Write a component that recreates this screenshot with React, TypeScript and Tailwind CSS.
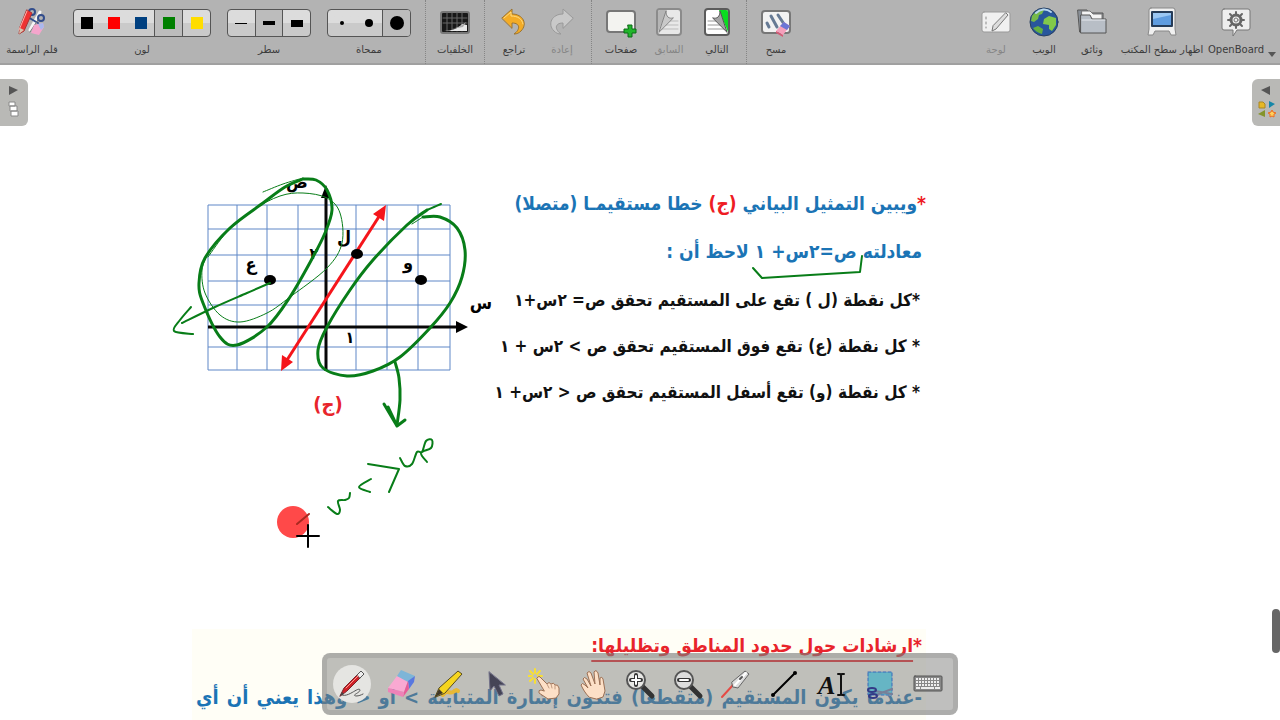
import type { ReactNode } from "react";

type Point = [number, number];

// Catmull-Rom through the recorded pen points
function smooth(points: Point[]) {
  let d = `M${points[0][0]} ${points[0][1]}`;
  for (let i = 0; i < points.length - 1; i++) {
    const p0 = points[i - 1] || points[i];
    const p1 = points[i];
    const p2 = points[i + 1];
    const p3 = points[i + 2] || p2;
    d += ` C${p1[0] + (p2[0] - p0[0]) / 6} ${p1[1] + (p2[1] - p0[1]) / 6} ${p2[0] - (p3[0] - p1[0]) / 6} ${p2[1] - (p3[1] - p1[1]) / 6} ${p2[0]} ${p2[1]}`;
  }
  return d;
}

const strokes: { width: number; points: Point[] }[] = [
  { width: 3, points: [[303, 179], [316, 180], [327, 190], [332, 210], [325, 233], [313, 257], [290, 297], [267, 327], [237, 345], [220, 337], [203, 303], [199, 283], [205, 258], [230, 228], [263, 203], [285, 187], [303, 179]] },
  { width: 1, points: [[263, 192], [283, 184], [303, 178]] },
  { width: 1, points: [[208, 257], [227, 232], [253, 210], [280, 196], [303, 193], [327, 198], [340, 213], [342, 243], [327, 268], [290, 297], [267, 313], [240, 322], [220, 315], [205, 293], [202, 270], [208, 253]] },
  { width: 3, points: [[427, 210], [407, 225], [373, 260], [350, 290], [327, 327], [318, 350], [323, 368], [347, 376], [373, 371], [400, 357], [430, 328], [450, 303], [462, 277], [465, 250], [457, 228], [440, 217], [423, 217]] },
  { width: 2, points: [[441, 204], [434, 207], [427, 210]] },
  { width: 1, points: [[423, 217], [412, 224]] },
  { width: 2, points: [[270, 283], [247, 293], [215, 307], [182, 323]] },
  { width: 2, points: [[191, 307], [180, 320], [174, 331], [193, 334]] },
  { width: 3, points: [[395, 362], [399, 378], [400, 400], [397, 425]] },
  { width: 2, points: [[328, 507], [337, 514], [340, 510], [338, 501], [345, 500], [349, 498], [350, 493]] },
  { width: 2, points: [[371, 479], [359, 487], [370, 492]] },
  { width: 2, points: [[400, 458], [405, 466], [412, 464], [417, 452], [422, 452], [426, 441], [432, 440], [431, 448], [421, 453], [427, 462]] },
];

const colors = [
  { name: "أسود", fill: "bg-black" },
  { name: "أحمر", fill: "bg-[#ff0000]" },
  { name: "أزرق", fill: "bg-[#004080]" },
  { name: "أخضر", fill: "bg-[#008000]", active: true },
  { name: "أصفر", fill: "bg-[#ffdd00]" },
];

const widths = [
  { name: "رفيع", shape: "w-3 h-px" },
  { name: "متوسط", shape: "w-3 h-1", active: true },
  { name: "سميك", shape: "w-3 h-[7px]" },
];

const erasers = [
  { name: "صغير", shape: "size-1 rounded-full" },
  { name: "متوسط", shape: "size-2 rounded-full" },
  { name: "كبير", shape: "size-3.5 rounded-full", active: true },
];

function Icon({ children }: { children: ReactNode }) {
  return (
    <svg viewBox="0 0 32 32" className="size-8" fill="none" strokeLinecap="round" strokeLinejoin="round" aria-hidden="true">
      {children}
    </svg>
  );
}

function ToolButton({ label, children, wide = "w-12", faded = false }: { label: string; children: ReactNode; wide?: string; faded?: boolean }) {
  return (
    <button type="button" className={`flex flex-col items-center gap-1 shrink-0 whitespace-nowrap ${wide} ${faded ? "text-[#858585]" : "text-[#3c3c3c]"}`}>
      {children}
      <span className="flex justify-center w-full text-[10px] leading-4">{label}</span>
    </button>
  );
}

function Choice({ label, items, wide }: { label: string; items: { name: string; fill?: string; shape?: string; active?: boolean }[]; wide: string }) {
  return (
    <div role="group" aria-label={label} className={`flex flex-col items-center shrink-0 pt-0.5 gap-[5px] text-[#3c3c3c] ${wide}`}>
      <div className="flex w-full h-7 rounded-sm border border-[#555] overflow-hidden bg-linear-to-b from-[#dcdcdc] from-50% to-[#cacaca] to-50%">
        {items.map((item, i) => (
          <button
            key={item.name}
            type="button"
            aria-label={item.name}
            aria-pressed={!!item.active}
            className={`flex-1 flex items-center justify-center ${item.active ? "bg-[#bcbcbc] border-l border-[#555]" : ""} ${item.active && i < items.length - 1 ? "border-r" : ""}`}
          >
            <span className={item.fill ? `size-3 ${item.fill}` : `bg-black ${item.shape}`} />
          </button>
        ))}
      </div>
      <span className="text-[10px] leading-4">{label}</span>
    </div>
  );
}

function Separator() {
  return <div className="w-px h-16 mx-[5px] shrink-0 border-l border-dotted border-[#858585]" />;
}

function PageIcon({ next = false }: { next?: boolean }) {
  return (
    <Icon>
      <rect x="3" y="2" width="26" height="28" rx="4" fill={next ? "#5b5b5b" : "#8b8b8b"} />
      <rect x="5" y="4" width="22" height="24" rx="2" fill={next ? "#fff" : "#e8e8e8"} />
      <path d="M7 15h18M7 19h18M7 23h18" stroke={next ? "#999" : "#bbb"} />
      {next ? (
        <>
          <path d="M18 4h7q2 0 2 2v20z" fill="#0bdc20" />
          <path d="M12 12c4 1 7-1 7-7l7 21z" fill="#a4a4a4" stroke="#555" />
        </>
      ) : (
        <>
          <path d="M14 4H7q-2 0-2 2v20z" fill="#b5b5b5" />
          <path d="M20 12c-4 1-7-1-7-7L6 26z" fill="#c9c9c9" stroke="#858585" />
        </>
      )}
    </Icon>
  );
}

function TopBar() {
  return (
    <header className="flex h-[65px] shrink-0 items-start bg-[#b3b3b3] border-b-2 border-[#a0a0a0]">
      <div className="flex items-start pt-1.5">
        <ToolButton label="قلم الراسمة" wide="w-16">
          <Icon>
            <path d="M14 24 24 6" stroke="#f5f5f5" strokeWidth="3" />
            <path d="M10 10 22 17" stroke="#324d8c" strokeWidth="2" />
            <circle cx="16" cy="6" r="3" stroke="#324d8c" strokeWidth="2" />
            <circle cx="25" cy="12" r="3" stroke="#324d8c" strokeWidth="2" />
            <path d="M22 14 14 26" stroke="#777" strokeWidth="1" />
            <path d="m11 4 5 3-8 18-5 3 1-7z" fill="#e33" stroke="#a33" />
            <path d="m11 5-8 19" stroke="#ffb0a8" />
            <path d="m4 22 4 2-5 4z" fill="#d8c5b0" />
            <path d="m18 19 9-2 1 4-5 8-8-2z" fill="#f5a5cc" />
            <path d="m22 18 5-1 1 4-3 3z" fill="#a9b9ee" />
          </Icon>
        </ToolButton>
        <div className="flex items-start gap-4 px-[9px] pt-px">
          <Choice label="لون" items={colors} wide="w-[138px]" />
          <Choice label="سطر" items={widths} wide="w-[84px]" />
          <Choice label="ممحاة" items={erasers} wide="w-[84px]" />
        </div>
      </div>
      <Separator />
      <div className="pt-1.5">
        <ToolButton label="الخلفيات">
          <Icon>
            <rect x="1" y="5" width="30" height="23" rx="3" fill="#777" />
            <rect x="3" y="7" width="26" height="19" rx="1" fill="#181818" />
            <path d="M8 7v18M13 7v18M18 7v18M23 7v18M4 12h24M4 17h24" stroke="#666" />
            <path d="M5 25c8 0 15-3 18-7l5 1v6z" fill="#e9e9e9" />
            <path d="M7 24c8-1 14-3 20-8l-3 5z" fill="#aaa" />
          </Icon>
        </ToolButton>
      </div>
      <Separator />
      <div className="flex pt-1.5">
        <ToolButton label="تراجع">
          <Icon>
            <path d="M4 12 14 3v5c11 0 16 10 9 17-2 2-4 3-7 3 6-4 7-11-2-11v5z" fill="#f4ac26" stroke="#9b7431" />
            <path d="M6 12 13 6v4c7 0 11 3 12 8" stroke="#ffdc80" />
          </Icon>
        </ToolButton>
        <ToolButton label="إعادة" faded>
          <Icon>
            <path d="M27 12 17 3v5C6 8 1 18 8 25c2 2 4 3 7 3-6-4-7-11 2-11v5z" fill="#c9c9c9" stroke="#999" />
          </Icon>
        </ToolButton>
      </div>
      <Separator />
      <div className="flex pt-1.5">
        <ToolButton label="صفحات">
          <Icon>
            <rect x="2" y="5" width="28" height="21" rx="3" fill="#f3f3f0" stroke="#777" strokeWidth="2" />
            <path d="M23 19h4v4h4v4h-4v4h-4v-4h-4v-4h4z" fill="#21b52b" stroke="#0d6a18" />
          </Icon>
        </ToolButton>
        <ToolButton label="السابق" faded>
          <PageIcon />
        </ToolButton>
        <ToolButton label="التالي">
          <PageIcon next />
        </ToolButton>
      </div>
      <Separator />
      <div className="pt-1.5">
        <ToolButton label="مسح">
          <Icon>
            <rect x="2" y="5" width="28" height="22" rx="3" fill="#f2f2f2" stroke="#777" strokeWidth="2" />
            <path d="m7 17 2 4M11 10l6 11M18 9l6 9" stroke="#667a94" strokeWidth="3" />
            <path d="m16 25 8-9 6 4-7 9z" fill="#f5a0bc" />
            <path d="m24 16 6 4-3 4-7-4z" fill="#6b75d5" />
            <path d="m16 25 7 4v2l-7-4z" fill="#d45a75" />
          </Icon>
        </ToolButton>
      </div>
      <div className="flex ml-auto pt-1.5">
        <ToolButton label="لوحة" faded>
          <Icon>
            <rect x="2" y="6" width="28" height="20" rx="2" fill="#f0f0f0" stroke="#999" />
            <path d="M6 11v11" stroke="#888" strokeDasharray="2 3" />
            <path d="m26 7 2 2-12 14-4 2 1-5z" fill="#ddd" stroke="#777" />
          </Icon>
        </ToolButton>
        <ToolButton label="الويب">
          <Icon>
            <circle cx="16" cy="16" r="14" fill="#28569c" stroke="#284060" />
            <path d="M4 10c3-4 7-7 12-6l-2 4-3 1-1 4-4 3-3-1z" fill="#76b94a" />
            <path d="m16 13 5-3 7 2v7l-4 6-3-2v-4l-6-1z" fill="#82c94a" />
            <path d="m5 22 5-2 5 3-1 5c-4-1-7-3-9-6z" fill="#64b040" />
            <path d="M8 7c4-4 10-5 15-1" stroke="#b9d8f0" strokeWidth="2" />
          </Icon>
        </ToolButton>
        <ToolButton label="وثائق">
          <Icon>
            <path d="M2 4h9l2 3h14v19H4z" fill="#888f97" stroke="#555" />
            <path d="M6 5h8l3 3h9v6H6z" fill="#f4f4f4" stroke="#777" />
            <path d="M5 9h9l2 4h14v14H5z" fill="#b8bec6" stroke="#555" />
            <path d="M6 14h23" stroke="#e5e8ed" />
          </Icon>
        </ToolButton>
        <ToolButton label="اظهار سطح المكتب" wide="w-[92px]">
          <Icon>
            <path d="M5 2h22q2 0 2 2v19l1 6h-5l-2-4H9l-2 4H2l1-6V4q0-2 2-2z" fill="#f0f0f0" stroke="#888" />
            <rect x="6" y="6" width="20" height="14" fill="#5f9cdf" stroke="#253b57" strokeWidth="2" />
            <path d="M7 13V7h18v2z" fill="#9bc7f3" />
          </Icon>
        </ToolButton>
        <ToolButton label="OpenBoard" wide="w-14">
          <Icon>
            <path d="M4 3h24q2 0 2 2v17q0 2-2 2H17l-4 6v-6H4q-2 0-2-2V5q0-2 2-2z" fill="#eee" stroke="#777" />
            <circle cx="16" cy="14" r="5" stroke="#666" strokeWidth="3" />
            <circle cx="16" cy="14" r="2" stroke="#777" />
            <path d="M16 6v3M16 19v3M8 14h3M21 14h3M10 8l2 2M20 18l2 2M22 8l-2 2M10 20l2-2" stroke="#666" strokeWidth="2" />
          </Icon>
        </ToolButton>
        <svg viewBox="0 0 16 8" className="w-4 h-2 mt-11" aria-hidden="true">
          <path d="M4 2h8l-4 5z" fill="#555" />
        </svg>
      </div>
    </header>
  );
}

function Graph() {
  return (
    <svg viewBox="192 165 312 260" className="w-[312px] h-[260px] shrink-0 font-bold font-['DejaVu_Sans_Condensed','DejaVu_Sans',sans-serif]" role="img" aria-label="التمثيل البياني (ج)">
      <path
        d="M208 205V370M237 205V370M267 205V370M298 205V370M356 205V370M387 205V370M418 205V370M450 205V370M208 205H450M208 229H450M208 255H450M208 281H450M208 305H450M208 347H450M208 370H450"
        stroke="#5e87c7"
        strokeWidth="1"
      />
      <path d="M326 194V371M208 327H458" stroke="#080808" strokeWidth="3" />
      <path d="m326 185 5 13h-10zM468 327l-12-6v12z" />
      <path d="M287 360 380 215" stroke="#f5151b" strokeWidth="3" />
      <path d="m386 205-2 16-11-7zM281 371l1-16 11 7z" fill="#f5151b" />
      <ellipse cx="270" cy="280" rx="6" ry="5" />
      <ellipse cx="357" cy="254" rx="6" ry="5" />
      <ellipse cx="421" cy="280" rx="6" ry="5" />
      <g textAnchor="middle" fontSize="18">
        <text x="297" y="188">ص</text>
        <text x="344" y="244">ل</text>
        <text x="251" y="271">ع</text>
        <text x="408" y="269">و</text>
        <text x="481" y="309">س</text>
        <text x="314" y="259" fontSize="16">٢</text>
        <text x="350" y="343" fontSize="16">١</text>
        <text x="328" y="411" fontSize="20" fill="#e8242b" direction="rtl">(ج)</text>
      </g>
    </svg>
  );
}

function Ink() {
  return (
    <svg viewBox="0 65 1280 655" className="absolute left-0 top-0 w-[1280px] h-[655px] pointer-events-none" fill="none" strokeLinecap="round" strokeLinejoin="round" aria-hidden="true">
      <g stroke="#087d18">
        {strokes.map((stroke, i) => (
          <path key={i} d={smooth(stroke.points)} strokeWidth={stroke.width} />
        ))}
        <path d="m384 404 13 22 8-6M388 407l9 19" strokeWidth="3" />
        <path d="m862 256-2 16-50 3-48 3-9-10M368 464l31 5-10 23" strokeWidth="2" />
      </g>
      <circle cx="293" cy="522" r="16" fill="#ff4949" />
      <path d="m297 524 12-10" stroke="#a82920" strokeWidth="2" />
      <path d="M297 536h22M308 525v22" stroke="#000" strokeWidth="2" />
    </svg>
  );
}

function Palette() {
  const tools: { name: string; icon: ReactNode }[] = [
    {
      name: "قلم",
      icon: (
        <>
          <path d="M6 27c6 3 17-9 18-5 0 3-9 5-4 6 3 0 5-1 7-2" stroke="#555" />
          <path d="m4 28 4-8L25 3l3 3-17 17z" fill="#cf2027" stroke="#77262b" />
          <path d="m21 7 4-4 3 3-4 4z" fill="#eee" stroke="#555" />
          <path d="m10 20 12-12" stroke="#ff9c91" />
          <path d="m4 28 2-4 2 2z" fill="#444" />
        </>
      ),
    },
    {
      name: "ممحاة",
      icon: (
        <>
          <path d="m4 20 9-12 11 5-4 11z" fill="#f9a9d2" />
          <path d="m13 8 4-6 14 6-7 6z" fill="#7db5d8" />
          <path d="m31 8-1 6-5 7-1-8z" fill="#5878e0" />
          <path d="m24 13 1 8-6 8 1-5z" fill="#e85a98" />
          <path d="m4 20 16 4-1 5-15-5z" fill="#ee82b8" />
        </>
      ),
    },
    {
      name: "تمييز",
      icon: (
        <>
          <path d="M11 27c4-6 6-1 10-3s3-3 5-1" stroke="#e8b935" strokeWidth="4" />
          <path d="m3 29 4-9L26 3l4 3-17 19z" fill="#f6d51e" stroke="#574b20" />
          <path d="m3 29 4-8 4 4z" fill="#40372a" />
        </>
      ),
    },
    { name: "تحديد", icon: <path d="m9 4 1 19 4-5 5 10 4-2-4-9h6z" fill="#454456" stroke="#73728a" /> },
    {
      name: "تفاعل",
      icon: (
        <>
          <path d="M7 1v4M7 11v4M0 8h4M10 8h4M2 3l3 3M12 3l-3 3M2 13l3-3" stroke="#f7df35" strokeWidth="2" />
          <path d="M9 10q2-3 4 0l6 6q2-3 4 0 3-2 4 1 3-1 4 3v6l-3 4-8 1-9-6q-1-3 2-3l3 1z" fill="#fde0c7" stroke="#9c7054" />
          <path d="m19 16 2 4M23 16l1 4M27 17v4" stroke="#c09a80" />
        </>
      ),
    },
    {
      name: "تحريك",
      icon: (
        <path d="M13 29c-4-4-6-8-8-12q1-3 4 0l3 3-5-9q1-3 4 0l4 7-4-13q2-3 4 0l4 11-1-12q2-3 4 1l2 12v-7q2-2 3 1l2 12-2 6-6 2z" fill="#fde0c7" stroke="#9c7054" />
      ),
    },
    {
      name: "تكبير",
      icon: (
        <>
          <path d="m19 19 9 9" stroke="#333" strokeWidth="5" />
          <circle cx="12" cy="12" r="9" fill="#e8e8e5" stroke="#555" strokeWidth="2" />
          <path d="M12 7v10M7 12h10" stroke="#333" strokeWidth="4" />
          <path d="M12 8v8M8 12h8" stroke="#fff" strokeWidth="2" />
        </>
      ),
    },
    {
      name: "تصغير",
      icon: (
        <>
          <path d="m19 19 9 9" stroke="#333" strokeWidth="5" />
          <circle cx="12" cy="12" r="9" fill="#ddd" stroke="#555" strokeWidth="2" />
          <path d="M7 12h10" stroke="#333" strokeWidth="4" />
          <path d="M8 12h8" stroke="#fff" strokeWidth="2" />
        </>
      ),
    },
    {
      name: "مؤشر ليزر",
      icon: (
        <>
          <path d="m2 29 11-12" stroke="#e54b45" strokeWidth="2" />
          <path d="M12 14 25 3l4 3-11 14-5-1z" fill="#ddd" stroke="#666" />
          <path d="m15 17 11-12" stroke="#fff" strokeWidth="2" />
          <path d="m20 11 2-2" stroke="#555" strokeWidth="2" />
        </>
      ),
    },
    {
      name: "خط",
      icon: (
        <>
          <path d="M5 27 27 5" stroke="#000" strokeWidth="2" />
          <circle cx="5" cy="27" r="2" fill="#000" />
          <circle cx="27" cy="5" r="2" fill="#000" />
        </>
      ),
    },
    {
      name: "نص",
      icon: (
        <>
          <text x="2" y="26" fontSize="26" fontStyle="italic" fontWeight="700" fill="#111" fontFamily="Liberation Serif, serif">A</text>
          <path d="M22 6h2l1 1 1-1h2M25 7v19M22 27h2l1-1 1 1h2" stroke="#111" strokeWidth="2" />
        </>
      ),
    },
    {
      name: "التقاط",
      icon: (
        <>
          <rect x="4" y="4" width="24" height="23" fill="#66b5c4" stroke="#3568bb" strokeDasharray="3 2" />
          <path d="m11 23 17 3M12 27l16-6" stroke="#777f98" strokeWidth="2" />
          <ellipse cx="8" cy="22" rx="4" ry="2" stroke="#333a86" strokeWidth="2" />
          <ellipse cx="9" cy="28" rx="4" ry="2" stroke="#333a86" strokeWidth="2" />
        </>
      ),
    },
    {
      name: "لوحة المفاتيح",
      icon: (
        <>
          <rect x="2" y="8" width="28" height="15" rx="1" fill="#888" stroke="#555" />
          <path d="M4 11h24M4 14h24M4 17h24" stroke="#eee" strokeWidth="2" strokeDasharray="2 1" strokeLinecap="butt" />
          <path d="M4 20h4M9 20h13M23 20h5" stroke="#eee" strokeWidth="2" strokeLinecap="butt" />
        </>
      ),
    },
  ];

  return (
    <div className="absolute bottom-[5px] inset-x-0 flex justify-center pointer-events-none">
      <div role="toolbar" aria-label="أدوات" className="flex items-center h-[62px] px-px border-5 border-[#77777740] rounded-lg bg-[#80807e80] pointer-events-auto">
        {tools.map((tool, i) => (
          <button key={tool.name} type="button" aria-label={tool.name} className="w-12 flex justify-center">
            <span className={`flex items-center justify-center size-[38px] rounded-full ${i === 0 ? "bg-[#e5e5e2]" : ""}`}>
              <Icon>{tool.icon}</Icon>
            </span>
          </button>
        ))}
      </div>
    </div>
  );
}

export default function App() {
  return (
    <div className="flex flex-col h-screen overflow-hidden bg-white font-['DejaVu_Sans',sans-serif]">
      <TopBar />

      {/* Board */}
      <main className="relative flex-1 overflow-hidden">
        <section className="flex items-start pt-[100px] pl-48">
          <Graph />
          <div dir="rtl" className="w-[422px] pt-3.5 whitespace-nowrap text-[19px] leading-12 font-bold font-['DejaVu_Sans_Condensed','DejaVu_Sans',sans-serif] text-[#1b74b5]">
            <p>
              <span className="text-[#ee1c24]">*</span>ويبين التمثيل البياني <span className="text-[#ee1c24]">(ج)</span> خطا مستقيمـا (متصلا)
            </p>
            <p className="pr-1">معادلته ص=٢س+ ١ لاحظ أن :</p>
            <div className="pt-0.5 pr-1.5 text-[17px] leading-[46px] text-[#111]">
              <p>*كل نقطة (ل ) تقع على المستقيم تحقق ص= ٢س+١</p>
              <p>* كل نقطة (ع) تقع فوق المستقيم تحقق ص &gt; ٢س + ١</p>
              <p>* كل نقطة (و) تقع أسفل المستقيم تحقق ص &lt; ٢س+ ١</p>
            </div>
          </div>
        </section>

        <section dir="rtl" className="absolute top-[564px] left-48 w-[734px] h-24 px-1 whitespace-nowrap font-bold text-[20px] bg-[#fffef6] font-['DejaVu_Sans_Condensed','DejaVu_Sans',sans-serif]">
          <h2 className="text-[19px] leading-8 text-[#e8242b]">
            *<span className="underline underline-offset-8 decoration-2">ارشادات حول حدود المناطق وتظليلها:</span>
          </h2>
          <p className="pt-3 leading-12 whitespace-normal [text-align-last:justify] text-[#1b74b5]">-عندما يكون المستقيم (متقطعا) فتكون إشارة المتباينة &gt; أو &lt; وهذا يعني أن أي</p>
        </section>

        <Ink />

        {/* Drawers */}
        <button type="button" aria-label="الصفحات" className="absolute left-0 top-3.5 w-7 rounded-r-md bg-[#b9b9b6]">
          <svg viewBox="0 0 28 47" className="w-7 h-[47px]" aria-hidden="true">
            <path d="m9 7 9 4-9 5z" fill="#555" />
            <path d="M9 23h6v4H9zM10 27h7v5h-7zM11 32h7v5h-7z" fill="#fff" stroke="#888" />
          </svg>
        </button>
        <button type="button" aria-label="المكتبة" className="absolute right-0 top-3.5 w-7 rounded-l-md bg-[#b9b9b6]">
          <svg viewBox="0 0 28 47" className="w-7 h-[47px]" aria-hidden="true">
            <path d="m18 7-9 4 9 5z" fill="#555" />
            <path d="M7 23h4l2 2v4H7z" fill="#e6b824" stroke="#a98624" />
            <path d="m17 22 6 3-6 4z" fill="#1687a8" />
            <path d="m6 35 7-4v7z" fill="#84942a" />
            <path d="m20 31 1 2 3 1-2 1v3l-2-1-2 1v-3l-2-1 3-1z" fill="#ffd15b" stroke="#ed6d22" />
          </svg>
        </button>
        <div className="absolute right-0 top-[544px] w-2 h-11 rounded-full bg-[#666]" />

        <Palette />
      </main>
    </div>
  );
}
